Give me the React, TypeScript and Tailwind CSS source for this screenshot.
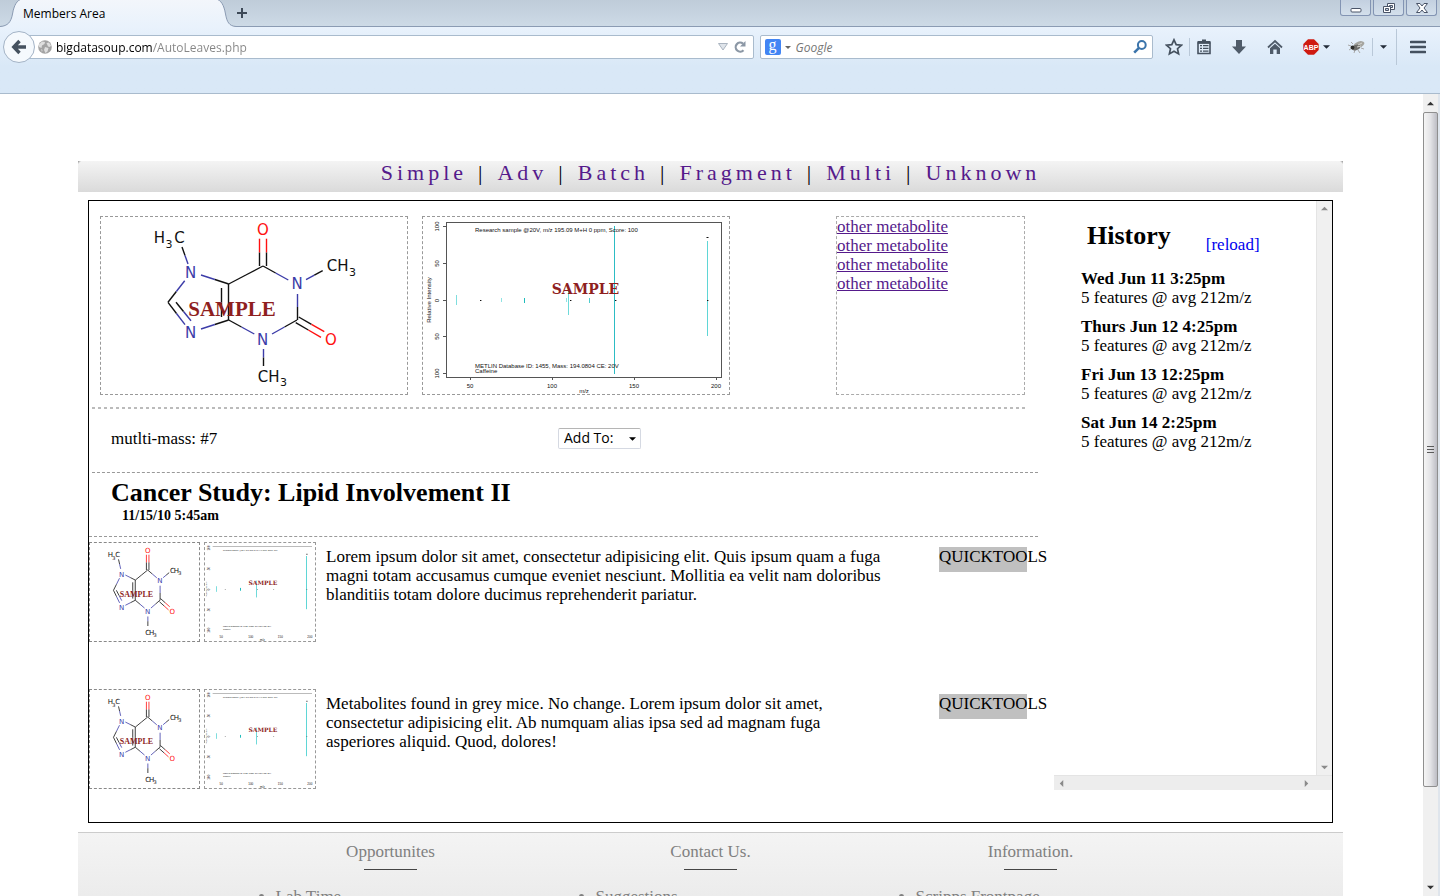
import type { ReactNode } from "react";

type Scale = { sx: number; sy: number; small?: boolean };

const BLACK = "#111111";
const BLUE = "#3c3ca8";
const RED = "#ff1010";

type Bond = [number, number, number, number, string, string];

const bonds: Bond[] = [
  [82, 31, 88, 48, BLACK, BLUE],
  [101, 59, 128.7, 68, BLUE, BLACK],
  [128.7, 68, 163, 50, BLACK, BLACK],
  [159.5, 50, 159.5, 22.7, BLACK, RED],
  [166.5, 50, 166.5, 22.7, BLACK, RED],
  [163, 50, 188.3, 64, BLACK, BLUE],
  [206, 63.7, 222.7, 54.7, BLUE, BLACK],
  [197.5, 78, 197.5, 104, BLUE, BLACK],
  [198.7, 101, 224.3, 115.7, BLACK, RED],
  [195.7, 106.7, 221, 121.3, BLACK, RED],
  [197, 104, 172, 118, BLACK, BLUE],
  [154.3, 118, 128.7, 104, BLUE, BLACK],
  [163.5, 133, 163.5, 150, BLUE, BLACK],
  [128.5, 68, 128.5, 104, BLACK, BLACK],
  [121.5, 72, 121.5, 101, BLACK, BLACK],
  [128.7, 104, 101, 113, BLACK, BLUE],
  [85, 108.7, 68, 86.3, BLUE, BLACK],
  [91, 104.7, 76, 86.3, BLUE, BLACK],
  [68, 86.3, 84.7, 64.7, BLACK, BLUE],
];

const atoms: [number, number, string, string][] = [
  [163, 13.5, "O", RED],
  [231, 123.7, "O", RED],
  [90.7, 56.7, "N", BLUE],
  [197, 68, "N", BLUE],
  [90.7, 116.7, "N", BLUE],
  [162.7, 123.7, "N", BLUE],
  [59.5, 22.3, "H", BLACK],
  [79.5, 22.3, "C", BLACK],
  [232, 50, "C", BLACK],
  [243, 50, "H", BLACK],
  [163, 160.5, "C", BLACK],
  [174, 160.5, "H", BLACK],
];

const subscripts: [number, number][] = [
  [69, 28],
  [252.5, 56],
  [183.5, 166],
];

function Molecule({ sx, sy, small }: Scale) {
  return (
    <svg className="-m-px block h-full w-full overflow-visible" role="img" aria-label="Caffeine structure">
      {bonds.map(([x1, y1, x2, y2, a, b], i) => {
        const mx = (x1 + x2) / 2;
        const my = (y1 + y2) / 2;
        return (
          <g key={i} strokeWidth={small ? 0.8 : 1.4}>
            <line x1={x1 * sx} y1={y1 * sy} x2={mx * sx} y2={my * sy} stroke={a} />
            <line x1={mx * sx} y1={my * sy} x2={x2 * sx} y2={y2 * sy} stroke={b} />
          </g>
        );
      })}
      {atoms.map(([x, y, t, c], i) => (
        <text
          key={i}
          x={x * sx}
          y={y * sy + (small ? 3 : 5)}
          fill={c}
          textAnchor="middle"
          className={small ? "font-['DejaVu_Sans'] text-[7px]" : "font-['DejaVu_Sans'] text-[15px]"}
        >
          {t}
        </text>
      ))}
      {subscripts.map(([x, y], i) => (
        <text
          key={i}
          x={x * sx}
          y={y * sy + (small ? 2 : 4)}
          fill={BLACK}
          textAnchor="middle"
          className={small ? "font-['DejaVu_Sans'] text-[5px]" : "font-['DejaVu_Sans'] text-[11px]"}
        >
          3
        </text>
      ))}
      <text
        x={132 * sx}
        y={93 * sy + (small ? 3 : 7)}
        fill="#8f1f1f"
        textAnchor="middle"
        className={
          small
            ? "font-['Liberation_Serif'] text-[8px] font-bold"
            : "font-['Liberation_Serif'] text-[21px] font-bold"
        }
      >
        SAMPLE
      </text>
    </svg>
  );
}

type Peak = { x: number; y1: number; y2: number; color: string; thumb?: boolean };

const peaks: Peak[] = [
  { x: 34.5, y1: 79, y2: 89, color: "#7fdede", thumb: true },
  { x: 79.5, y1: 82, y2: 86, color: "#8fe3e3" },
  { x: 102.5, y1: 82, y2: 87, color: "#1fbcbc", thumb: true },
  { x: 144.5, y1: 82, y2: 86, color: "#8fe3e3" },
  { x: 146.5, y1: 69, y2: 99, color: "#6fdada", thumb: true },
  { x: 167.5, y1: 82, y2: 87, color: "#4fcece" },
  { x: 192.5, y1: 10, y2: 158, color: "#2cbcc4" },
  { x: 285.5, y1: 25, y2: 120, color: "#5fd6d6", thumb: true },
];

const yTicks: [number, string][] = [
  [10.5, "100"],
  [47.5, "50"],
  [84.5, "0"],
  [120.5, "50"],
  [157.5, "100"],
];

const xTicks: [number, string][] = [
  [48, "50"],
  [130, "100"],
  [212, "150"],
  [294, "200"],
];

function Spectrum({ sx, sy, small }: Scale) {
  const label = small
    ? "font-['Liberation_Sans'] text-[3px]"
    : "font-['Liberation_Sans'] text-[6px]";
  const caption = small
    ? "font-['Liberation_Sans'] text-[2px]"
    : "font-['Liberation_Sans'] text-[6px]";
  return (
    <svg className="-m-px block h-full w-full overflow-visible" role="img" aria-label="Caffeine spectrum">
      {small ? (
        <line x1={24 * sx} x2={300 * sx} y1={4.5} y2={4.5} stroke="#bbbbbb" strokeWidth={1} />
      ) : (
        <rect x={24.5} y={6.5} width={275} height={155} fill="none" stroke="#555555" />
      )}
      {peaks
        .filter((p) => !small || p.thumb)
        .map((p) => (
          <line
            key={p.x}
            x1={small ? Math.floor(p.x * sx) + 0.5 : p.x}
            x2={small ? Math.floor(p.x * sx) + 0.5 : p.x}
            y1={p.y1 * sy}
            y2={p.y2 * sy}
            stroke={p.color}
            strokeWidth={1}
          />
        ))}
      {[58, 148, 193, 285].map((x) => (
        <rect key={x} x={x * sx} y={84 * sy} width={small ? 0.6 : 1.4} height={small ? 0.6 : 1} fill="#111" />
      ))}
      <rect x={284.5 * sx} y={21 * sy} width={small ? 1 : 2} height={1} fill="#111" />
      {yTicks.map(([y, t], i) => (
        <g key={i}>
          {!small && <line x1={21} x2={24} y1={y} y2={y} stroke="#555555" />}
          <text
            transform={`translate(${16.5 * sx} ${y * sy}) rotate(-90)`}
            textAnchor="middle"
            fill="#111"
            className={label}
          >
            {t}
          </text>
        </g>
      ))}
      {xTicks.map(([x, t]) => (
        <g key={x}>
          {!small && <line x1={x + 0.5} x2={x + 0.5} y1={162} y2={164} stroke="#555555" />}
          <text x={x * sx} y={172 * sy} textAnchor="middle" fill="#111" className={label}>
            {t}
          </text>
        </g>
      ))}
      <text x={162 * sx} y={177 * sy} textAnchor="middle" fill="#111" className={label}>
        m/z
      </text>
      <text
        transform={`translate(${8.5 * sx} ${84 * sy}) rotate(-90)`}
        textAnchor="middle"
        fill="#111"
        className={caption}
      >
        Relative Intensity
      </text>
      <text x={53 * sx} y={16 * sy} fill="#111" className={caption}>
        Research sample @20V, m/z 195.09 M+H 0 ppm, Score: 100
      </text>
      <text x={53 * sx} y={152 * sy} fill="#111" className={caption}>
        METLIN Database ID: 1455, Mass: 194.0804 CE: 20V
      </text>
      <text x={53 * sx} y={157 * sy} fill="#111" className={caption}>
        Caffeine
      </text>
      <text
        x={163.5 * sx}
        y={73 * sy + (small ? 2 : 5)}
        fill="#8f1f1f"
        textAnchor="middle"
        className={
          small
            ? "font-['DejaVu_Serif'] text-[6px] font-bold"
            : "font-['DejaVu_Serif'] text-[14px] font-bold"
        }
      >
        SAMPLE
      </text>
    </svg>
  );
}

function IconButton({ label, children, className = "" }: { label: string; children: ReactNode; className?: string }) {
  return (
    <button type="button" aria-label={label} className={`flex h-6 shrink-0 items-center justify-center ${className}`}>
      {children}
    </button>
  );
}

function Caret({ className = "" }: { className?: string }) {
  return (
    <svg viewBox="0 0 8 4" className={className} aria-hidden="true">
      <path d="M0 0h8L4 4z" fill="currentColor" />
    </svg>
  );
}

function TabStrip() {
  return (
    <div className="flex h-[27px] items-start border-b border-[#8b9bb3] bg-linear-to-b from-[#bfccd9] to-[#cddae6]">
      <div className="relative -mb-px flex h-[27px] w-[236px] shrink-0 items-center">
        <svg viewBox="0 0 236 27" className="absolute inset-0 h-full w-full" aria-hidden="true">
          <defs>
            <linearGradient id="tab" x1="0" y1="0" x2="0" y2="1">
              <stop offset="0" stopColor="#f3f6fb" />
              <stop offset="1" stopColor="#e9f2fc" />
            </linearGradient>
          </defs>
          <path
            d="M0 26.5C8 26 11 22 12.500 14C14 5 17 0 22 -1H216C221 0 224 5 225.500 14C227 22 229 26 236 26.500V27H0z"
            fill="url(#tab)"
          />
          <path
            d="M0 26.500C8 26 11 22 12.500 14C14 5 17 0 22 -1M216 -1C221 0 224 5 225.500 14C227 22 229 26 236 26.500"
            fill="none"
            stroke="#8b9bb3"
          />
        </svg>
        <span className="relative pl-[23px] text-[12px] leading-4 text-black">Members Area</span>
      </div>
      <IconButton label="Open a new tab" className="w-3 pt-0.5">
        <svg viewBox="0 0 12 12" className="h-3 w-3">
          <path d="M6 1v10M1 6h10" stroke="#3d4957" strokeWidth="2" />
        </svg>
      </IconButton>
      <div className="ml-auto flex gap-[2px] pr-[3px]">
        {["Minimize", "Restore", "Close"].map((name) => (
          <button
            key={name}
            type="button"
            aria-label={name}
            className="flex h-4 w-[31px] items-center justify-center rounded-b-[3px] border border-t-0 border-[#8394b3] bg-linear-to-b from-[#c3d0e0] to-[#d3dfeb]"
          >
            <svg viewBox="0 0 14 12" className="h-3 w-[14px]" fill="#fff" stroke="#4a5468">
              {name === "Minimize" && <rect x="2" y="6.500" width="10" height="3.500" rx="1" />}
              {name === "Restore" && (
                <>
                  <path d="M5.500 1.500h7v6h-7z" />
                  <path d="M7.500 3.500h3v2h-3z" fill="#c3d0e0" />
                  <path d="M1.500 4.500h7v6h-7z" />
                  <path d="M3.500 6.500h3v2h-3z" fill="#c3d0e0" />
                </>
              )}
              {name === "Close" && (
                <path d="M1.500 1.500h3.500L7 4l2-2.500h3.500L9 6l3.500 4.500H9L7 8l-2 2.500H1.500L5 6z" />
              )}
            </svg>
          </button>
        ))}
      </div>
    </div>
  );
}

function Toolbar() {
  return (
    <div className="h-[67px] border-b border-[#a9bbcd] bg-linear-to-b from-[#e9f2fc] to-[#d9e8f7] to-60%">
      <div className="flex h-10 items-center pl-[3px] pr-[10px]">
        <button
          type="button"
          aria-label="Back"
          className="z-10 -mr-4 flex h-8 w-8 shrink-0 items-center justify-center rounded-full border border-[#a3b3c6] bg-[#f5f9fd]"
        >
          <svg viewBox="0 0 16 16" className="h-4 w-4">
            <path d="M8.500 2L2.800 8l5.700 6M3.500 8H15" fill="none" stroke="#45515f" strokeWidth="3.400" />
          </svg>
        </button>
        <div className="flex h-6 flex-[733] items-center rounded-r-[2px] border border-[#a9bbcd] bg-white pl-[18px] pr-[5px]">
          <svg viewBox="0 0 14 14" className="h-[14px] w-[14px] shrink-0" aria-hidden="true">
            <circle cx="7" cy="7" r="6.800" fill="#a3a3a3" />
            <path d="M1 4.500L4 1.500l3 .5-.5 2L4 5.500 3.500 8 1 7zM8.500 3l2.500-.5 2 3-1 1.500-2-.5zM7 7l3.500 1-1 3.500L7.500 13 6 10zM3 9l1.500 1-.5 2z" fill="#dedede" />
          </svg>
          <input
            aria-label="Address"
            defaultValue="bigdatasoup.com/AutoLeaves.php"
            className="ml-1 h-5 min-w-0 flex-1 bg-[linear-gradient(to_right,#000000_96px,#858585_96px)] bg-clip-text text-[12px] leading-4 text-transparent outline-none"
          />
          <IconButton label="Show history" className="w-[14px]">
            <svg viewBox="0 0 10 8" className="h-2 w-[10px]">
              <path d="M.5.5h9L5 7z" fill="#dfe4ea" stroke="#aab4c0" />
            </svg>
          </IconButton>
          <IconButton label="Reload" className="ml-0.5 w-4">
            <svg viewBox="0 0 14 14" className="h-[14px] w-[14px]">
              <path d="M10.500 10.200A4.500 4.500 0 1 1 10 3.600" fill="none" stroke="#8b97a5" strokeWidth="2.200" />
              <path d="M12.500 1v5.500H7z" fill="#8b97a5" />
            </svg>
          </IconButton>
        </div>
        <div className="ml-1.5 flex h-6 flex-[395] items-center rounded-[2px] border border-[#a9bbcd] bg-white pl-1 pr-[5px]">
          <button type="button" aria-label="Search engine" className="flex shrink-0 items-center gap-1">
            <span className="flex h-4 w-4 items-center justify-center rounded-[2px] bg-[#4285f4] font-['Liberation_Serif'] text-[16px] leading-3 text-white">
              <span className="pb-1">g</span>
            </span>
            <Caret className="h-[3px] w-[6px] text-[#666666]" />
          </button>
          <input
            aria-label="Search"
            placeholder="Google"
            className="ml-[5px] h-5 min-w-0 flex-1 text-[12px] leading-4 italic outline-none placeholder:text-[#757575]"
          />
          <IconButton label="Submit search" className="w-[14px]">
            <svg viewBox="0 0 14 14" className="h-[14px] w-[14px]" fill="none" stroke="#3b74ab">
              <circle cx="8.800" cy="5" r="3.900" strokeWidth="2" />
              <path d="M6 7.800L1.200 12.600" strokeWidth="2.600" />
            </svg>
          </IconButton>
        </div>
        <IconButton label="Bookmark this page" className="ml-[9px] w-6">
          <svg viewBox="0 0 18 18" className="h-[18px] w-[18px]">
            <path d="M9 1.800l2.200 4.800 5.200.6-3.900 3.500 1.100 5.200L9 13.300l-4.600 2.600 1.100-5.200L1.600 7.200l5.200-.6z" fill="none" stroke="#45515f" strokeWidth="1.700" />
          </svg>
        </IconButton>
        <span className="ml-[3px] h-[18px] w-px shrink-0 bg-[#b9c8d8]" />
        <IconButton label="Bookmarks" className="ml-0.5 w-6">
          <svg viewBox="0 0 16 16" className="h-4 w-4">
            <path d="M2 4h12v10.500H2z" fill="none" stroke="#45515f" strokeWidth="1.600" />
            <path d="M6 .5h4V2h4.500v2.500h-13V2H6z" fill="#45515f" />
            <path d="M4 6.700h2M7 6.700h5.500M4 9.400h2M7 9.400h5.500M4 12.100h2M7 12.100h5.500" stroke="#45515f" strokeWidth="1.200" />
          </svg>
        </IconButton>
        <IconButton label="Downloads" className="ml-[11px] w-6">
          <svg viewBox="0 0 16 16" className="h-4 w-4">
            <path d="M5 1h6v6.500h4L8 15 1 7.500h4z" fill="#4f5b69" />
          </svg>
        </IconButton>
        <IconButton label="Home" className="ml-3 w-6">
          <svg viewBox="0 0 16 16" className="h-4 w-4">
            <path d="M1 8.500L8 2l7 6.500" fill="none" stroke="#4f5b69" strokeWidth="1.800" />
            <path d="M8 4.700l5 4.600V15H9.700v-4.500H6.300V15H3V9.300z" fill="#4f5b69" />
          </svg>
        </IconButton>
        <IconButton label="Adblock Plus" className="ml-3 w-[31px] gap-1 pl-1">
          <svg viewBox="0 0 16 16" className="h-4 w-4 shrink-0">
            <path d="M5 .3h6L15.700 5v6L11 15.700H5L.3 11V5z" fill="#cf1a10" />
            <text x="8" y="10.500" textAnchor="middle" fill="#fff" className="font-['Liberation_Sans'] text-[7px] font-bold">
              ABP
            </text>
          </svg>
          <Caret className="h-1 w-[7px] shrink-0 text-[#222b38]" />
        </IconButton>
        <IconButton label="Firebug" className="ml-[15px] w-6">
          <svg viewBox="0 0 18 14" className="h-[14px] w-[18px]">
            <path d="M3 6L0 5M4 8l-3 2M7 10l-1 3M10 10l2 3M13 8l3 1M5 4L3 2" stroke="#a8a8a8" fill="none" />
            <ellipse cx="11" cy="4.500" rx="5.500" ry="3" fill="#a5a5a0" transform="rotate(-20 11 4.500)" />
            <ellipse cx="8" cy="7.500" rx="4.500" ry="2.600" fill="#6d6d6a" transform="rotate(-20 8 7.500)" />
            <circle cx="4.500" cy="7.500" r="1.900" fill="#2d2d2b" />
            <path d="M10 5l4-2M9 7l4-1" stroke="#d5d5d0" />
          </svg>
        </IconButton>
        <span className="ml-[3px] h-[18px] w-px shrink-0 bg-[#b9c8d8]" />
        <IconButton label="Firebug options" className="ml-1 w-3">
          <Caret className="h-1 w-[7px] text-[#222b38]" />
        </IconButton>
        <span className="ml-[7px] h-9 w-px shrink-0 bg-[#b9c8d8]" />
        <IconButton label="Open menu" className="ml-[9px] w-6">
          <svg viewBox="0 0 16 14" className="h-[14px] w-4">
            <path d="M1 2h14M1 7h14M1 12h14" stroke="#45515f" strokeWidth="2.600" strokeLinecap="round" />
          </svg>
        </IconButton>
      </div>
    </div>
  );
}

function ArrowGlyph({ dir }: { dir: "up" | "down" | "left" | "right" }) {
  const d = {
    up: "M0 6l4-4 4 4z",
    down: "M0 2h8L4 6z",
    left: "M6 0v8L2 4z",
    right: "M2 0v8l4-4z",
  }[dir];
  return (
    <svg viewBox="0 0 8 8" className="h-[7px] w-[7px]" aria-hidden="true">
      <path d={d} fill="currentColor" />
    </svg>
  );
}

function PageScrollbar() {
  return (
    <div className="flex w-[17px] shrink-0 flex-col border-r-2 border-[#dfe5ec] bg-[#f0f0f0]">
      <button type="button" aria-label="Scroll up" className="flex h-[18px] items-center justify-center text-[#333333]">
        <ArrowGlyph dir="up" />
      </button>
      <div className="flex flex-[675] items-center justify-center rounded-[2px] border border-[#8f8f8f] bg-linear-to-r from-[#f5f5f5] via-[#e3e3e6] to-[#bdbdc4]">
        <svg viewBox="0 0 7 8" className="h-2 w-[7px]" aria-hidden="true">
          <path d="M0 .5h7M0 3.500h7M0 6.500h7" stroke="#5a5a5a" />
        </svg>
      </div>
      <div className="flex-[92]" />
      <button type="button" aria-label="Scroll down" className="flex h-[17px] items-center justify-center text-[#333333]">
        <ArrowGlyph dir="down" />
      </button>
    </div>
  );
}

const history = ["Wed Jun 11 3:25pm", "Thurs Jun 12 4:25pm", "Fri Jun 13 12:25pm", "Sat Jun 14 2:25pm"];

function HistoryPanel() {
  return (
    <aside className="flex h-[589px] w-[278px] shrink-0 flex-col">
      <div className="flex min-h-0 flex-1">
        <div className="min-w-0 flex-1 pl-[27px] pt-5">
          <div className="flex items-start gap-[35px] pl-1.5">
            <h2 className="text-[26px] leading-[30px] font-bold">History</h2>
            <a href="#reload" className="pt-[14px] text-[#0000ee]">
              [reload]
            </a>
          </div>
          <ul className="mt-[15px] flex flex-col gap-[10px]">
            {history.map((when) => (
              <li key={when}>
                <p className="font-bold">{when}</p>
                <p>5 features @ avg 212m/z</p>
              </li>
            ))}
          </ul>
        </div>
        <div className="flex w-4 flex-col items-center justify-between border-l border-[#e4e4e4] bg-[#f0f0f0] py-1 text-[#8a8a8a]">
          <ArrowGlyph dir="up" />
          <ArrowGlyph dir="down" />
        </div>
      </div>
      <div className="flex h-[15px] items-center justify-between border-t border-[#e4e4e4] bg-[#ededed] pl-1 pr-[22px] text-[#8a8a8a]">
        <ArrowGlyph dir="left" />
        <ArrowGlyph dir="right" />
      </div>
    </aside>
  );
}

const entries = [
  "Lorem ipsum dolor sit amet, consectetur adipisicing elit. Quis ipsum quam a fuga magni totam accusamus cumque eveniet nesciunt. Mollitia ea velit nam doloribus blanditiis totam dolore ducimus reprehenderit pariatur.",
  "Metabolites found in grey mice. No change. Lorem ipsum dolor sit amet, consectetur adipisicing elit. Ab numquam alias ipsa sed ad magnam fuga asperiores aliquid. Quod, dolores!",
];

function Results() {
  return (
    <div className="min-w-0 flex-1">
      <div className="flex pl-[11px] pr-[29px] pt-[15px]">
        <div className="h-[179px] w-[308px] border border-dashed border-[#999999]">
          <Molecule sx={1} sy={1} />
        </div>
        <div className="ml-[14px] h-[179px] w-[308px] border border-dashed border-[#999999]">
          <Spectrum sx={1} sy={1} />
        </div>
        <ul className="ml-auto h-[179px] w-[189px] border border-dashed border-[#aaaaaa]">
          {[1, 2, 3, 4].map((n) => (
            <li key={n}>
              <a href={`#metabolite-${n}`} className="text-[#551a8b] underline">
                other metabolite
              </a>
            </li>
          ))}
        </ul>
      </div>
      <div className="ml-[3px] mr-[29px] mt-3 h-0.5 bg-[repeating-linear-gradient(to_right,#bbbbbb_0,#bbbbbb_3px,transparent_3px,transparent_6px)]" />
      <div className="flex h-[63px] items-center pb-[5px] pl-[22px]">
        <p className="w-[447px]">mutlti-mass: #7</p>
        <div className="relative font-['Open_Sans',sans-serif]">
          <select
            aria-label="Add to"
            className="block h-[21px] w-[83px] appearance-none rounded-[2px] border border-[#d5d9e2] border-t-[#b5b5b5] bg-white pl-[5px] text-[14px] leading-4 text-black"
          >
            <option>Add To:</option>
          </select>
          <Caret className="pointer-events-none absolute top-[9px] right-[5px] h-1 w-[7px]" />
        </div>
      </div>
      <div className="ml-[3px] mr-4 border-t border-dashed border-[#999999]" />
      <header className="h-[63px] pl-[22px] pt-[5px]">
        <h1 className="text-[26px] leading-[30px] font-bold">Cancer Study: Lipid Involvement II</h1>
        <p className="pl-[11px] text-[14px] leading-4 font-bold">11/15/10 5:45am</p>
      </header>
      <div className="mr-4 border-t border-dashed border-[#999999]" />
      <div className="flex flex-col gap-[47px] pt-[5px]">
        {entries.map((text) => (
          <article key={text} className="flex h-[100px] items-start">
            <div className="h-[100px] w-[111px] shrink-0 border border-dashed border-[#888888]">
              <Molecule sx={0.36} sy={0.56} small />
            </div>
            <div className="ml-1 h-[100px] w-[112px] shrink-0 border border-dashed border-[#999999]">
              <Spectrum sx={0.36} sy={0.56} small />
            </div>
            <p className="ml-[10px] w-[562px] shrink-0 pt-[5px]">{text}</p>
            <div className="mt-[5px] mr-[27px] ml-auto h-[25px] w-[88px] shrink-0 bg-[#c0c0c0] whitespace-nowrap">QUICKTOOLS</div>
          </article>
        ))}
      </div>
    </div>
  );
}

const links = ["Simple", "Adv", "Batch", "Fragment", "Multi", "Unknown"];

const footer = [
  { title: "Opportunites", item: "Lab Time" },
  { title: "Contact Us.", item: "Suggestions" },
  { title: "Information.", item: "Scripps Frontpage" },
];

export default function App() {
  return (
    <div className="flex h-screen flex-col overflow-hidden bg-white font-['Open_Sans',sans-serif]">
      <TabStrip />
      <Toolbar />
      <div className="flex min-h-0 flex-1">
        <div className="min-w-0 flex-1 overflow-hidden pr-20 pl-[78px] pt-[67px] font-['Liberation_Serif',serif] text-[17px] leading-[19px] text-black">
          <nav className="relative flex h-[31px] justify-center gap-[11px] bg-linear-to-b from-[#f4f4f4] to-[#dadada] text-[22px] leading-6 tracking-[4px]">
            <span className="absolute top-0 left-0 h-[3px] w-[3px] bg-linear-to-br from-[#8a8a8a] to-transparent to-60%" />
            <span className="absolute top-0 right-0 h-[3px] w-[3px] bg-linear-to-bl from-[#8a8a8a] to-transparent to-60%" />
            {links.map((name, i) => (
              <span key={name} className="flex gap-[11px]">
                {i > 0 && <span>|</span>}
                <a href={`#${name}`} className="text-[#551a8b]">
                  {name}
                </a>
              </span>
            ))}
          </nav>
          <main className="mx-[10px] mt-2 flex min-h-[623px] items-start border border-black">
            <Results />
            <HistoryPanel />
          </main>
          <footer className="mt-[9px] flex h-[200px] justify-center border-t border-[#cccccc] bg-linear-to-b from-[#f4f4f4] to-[#dadada] pt-[9px] text-[#808080]">
            {footer.map(({ title, item }) => (
              <section key={title} className="w-80">
                <h3 className="text-center">{title}</h3>
                <hr className="mx-auto mt-2 w-[53px] border-[#444444]" />
                <ul className="mt-[17px] list-disc pl-[45px]">
                  <li>{item}</li>
                </ul>
              </section>
            ))}
          </footer>
        </div>
        <PageScrollbar />
      </div>
    </div>
  );
}
